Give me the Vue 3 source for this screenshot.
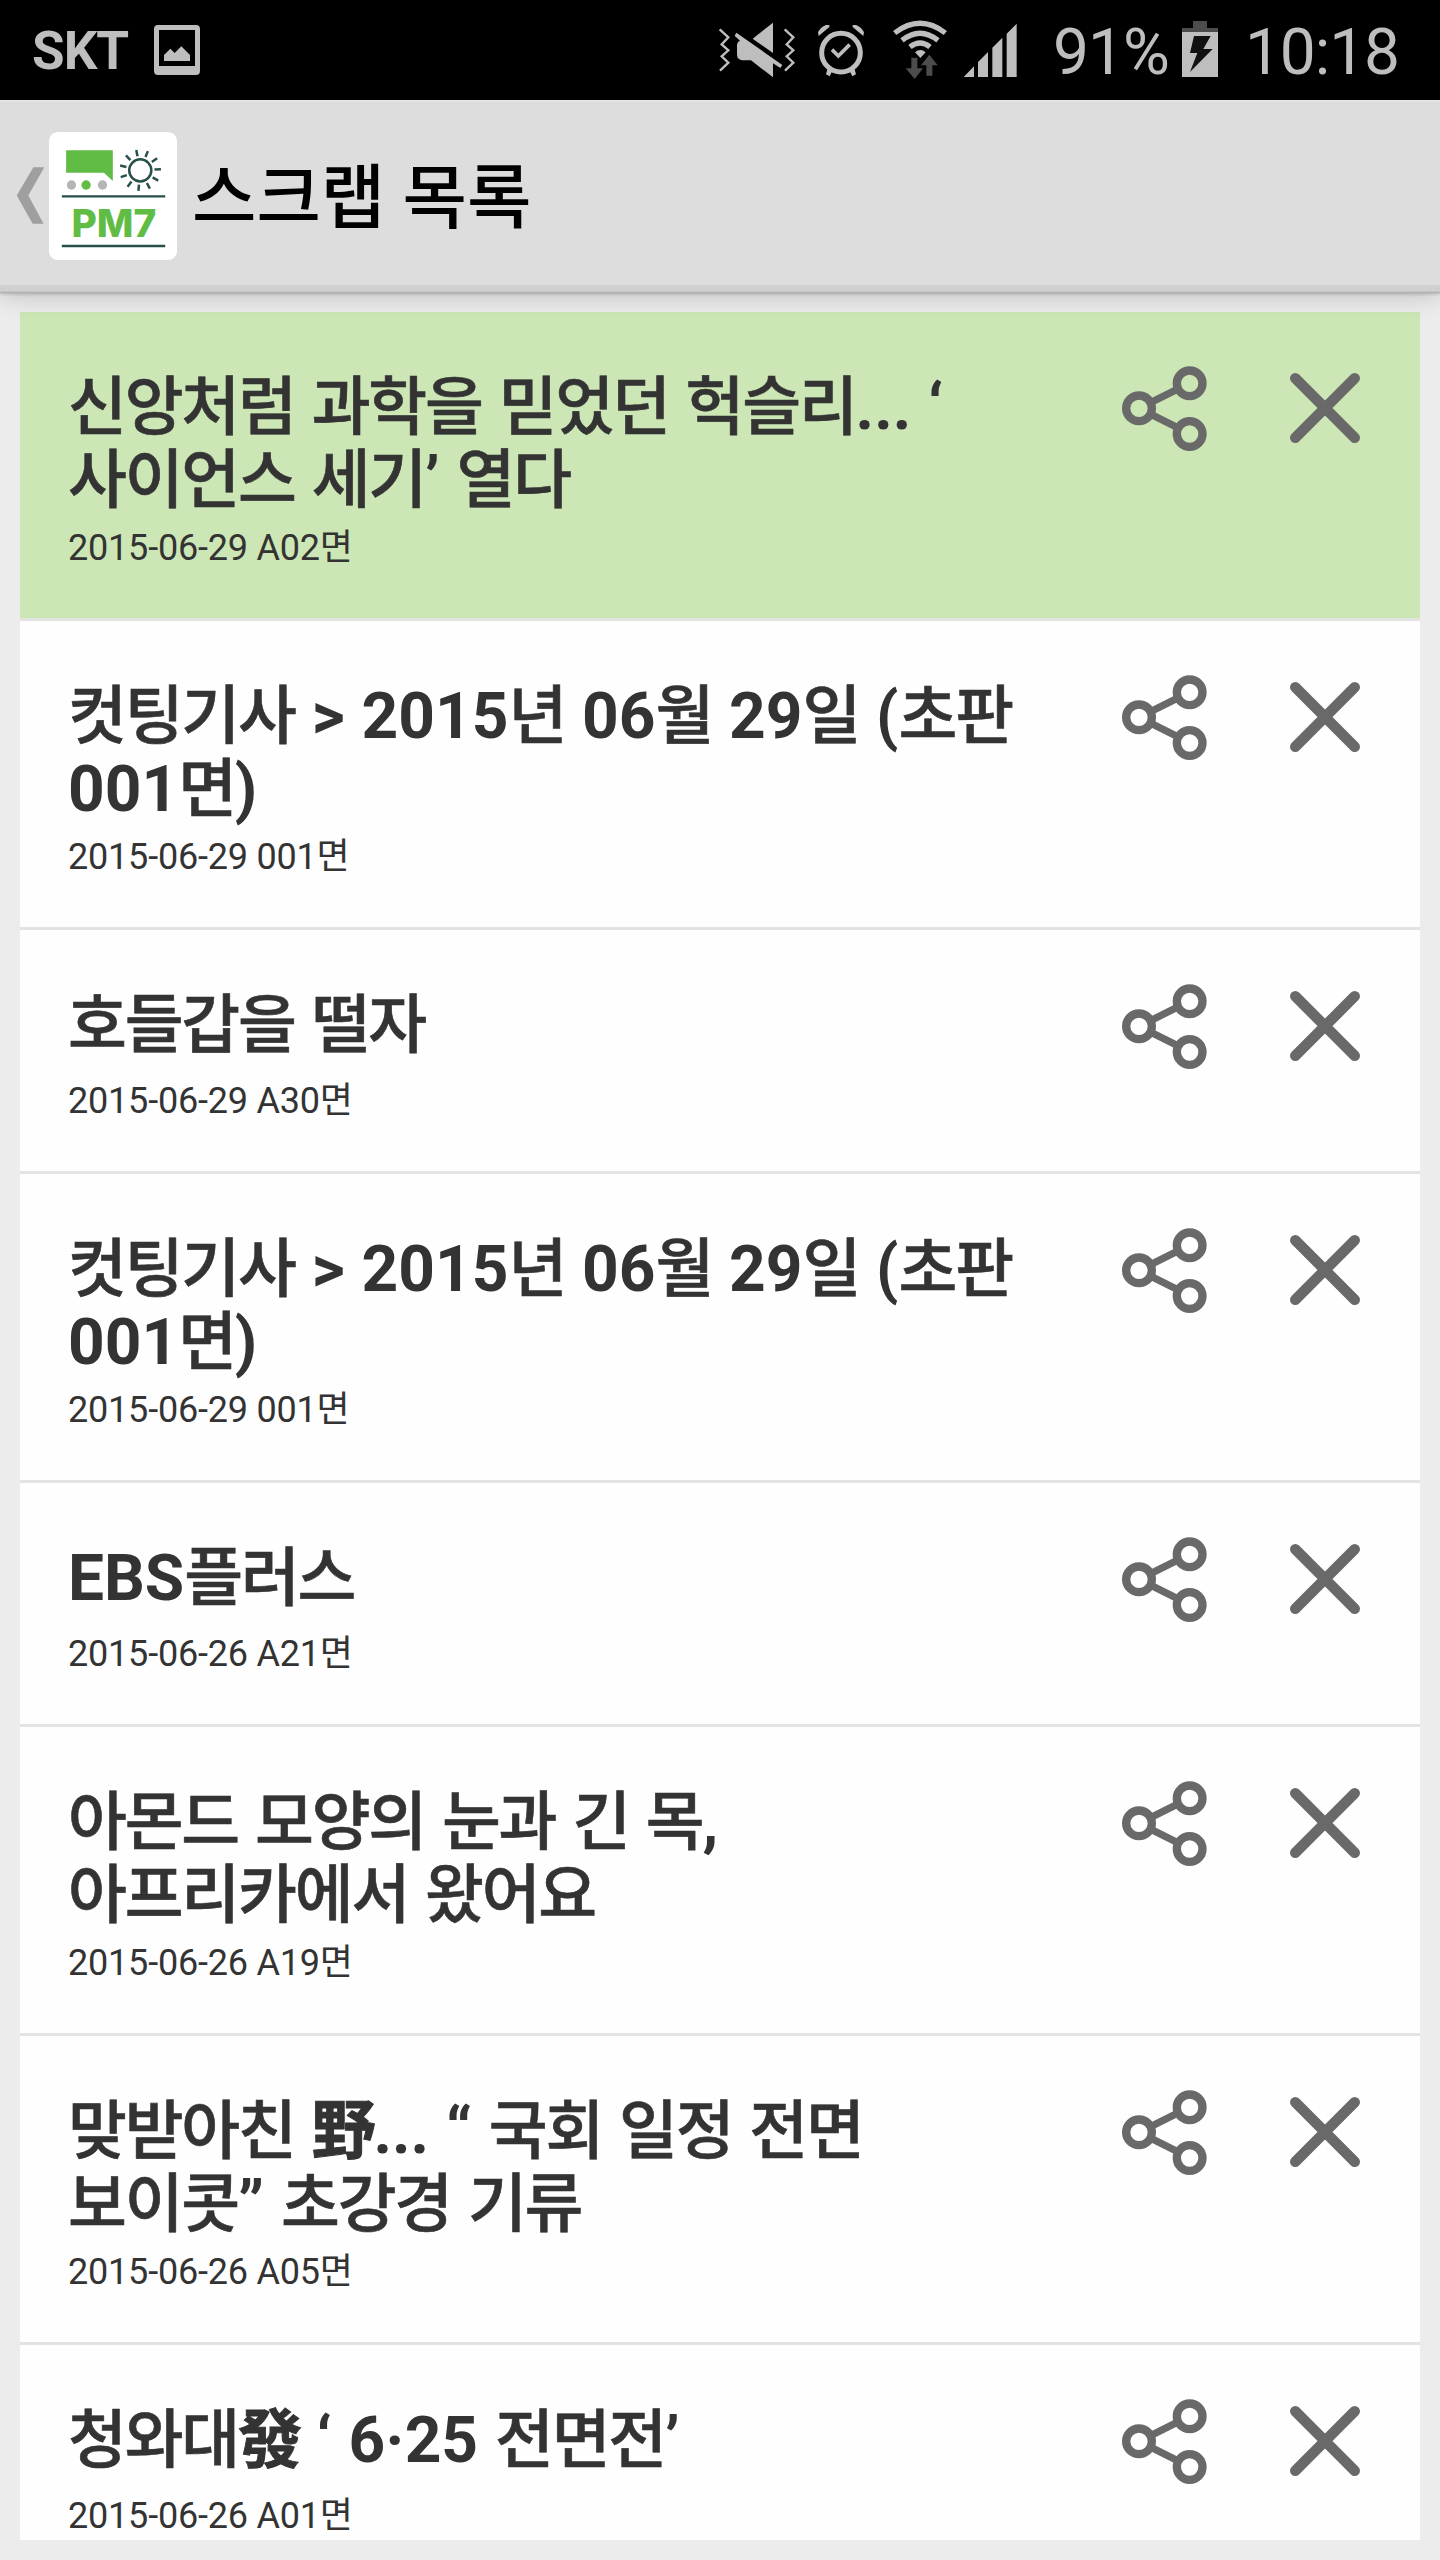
<script setup>
const scraps = [
  { id: 1, lines: ['신앙처럼 과학을 믿었던 헉슬리... ‘', '사이언스 세기’ 열다'], meta: '2015-06-29 A02면', selected: true },
  { id: 2, lines: ['컷팅기사 > 2015년 06월 29일 (초판', '001면)'], meta: '2015-06-29 001면' },
  { id: 3, lines: ['호들갑을 떨자'], meta: '2015-06-29 A30면' },
  { id: 4, lines: ['컷팅기사 > 2015년 06월 29일 (초판', '001면)'], meta: '2015-06-29 001면' },
  { id: 5, lines: ['EBS플러스'], meta: '2015-06-26 A21면' },
  { id: 6, lines: ['아몬드 모양의 눈과 긴 목,', '아프리카에서 왔어요'], meta: '2015-06-26 A19면' },
  { id: 7, lines: ['맞받아친 野... “ 국회 일정 전면', '보이콧” 초강경 기류'], meta: '2015-06-26 A05면' },
  { id: 8, lines: ['청와대發 ‘ 6·25 전면전’'], meta: '2015-06-26 A01면' },
];

// Separa hangul, hanja y texto latino para darle a cada uno su ajuste
const toRuns = (text) =>
  (text.match(/[가-힣]+|[一-龥]+|[^가-힣一-龥]+/g) || []).map((part) => ({
    text: part,
    hangul: /[가-힣]/.test(part),
    hanja: /[一-龥]/.test(part),
  }));

const sunRays = Array.from({ length: 11 }, (_, i) => (i * 360) / 11 - 3);
</script>

<template>
  <div class="screen">
    <div class="status-bar">
      <span class="carrier">SKT</span>
      <svg class="icon-picture" viewBox="462 75 138 150">
        <path
          fill-rule="evenodd"
          d="M474 75h114a12 12 0 0 1 12 12v126a12 12 0 0 1-12 12H474a12 12 0 0 1-12-12V87a12 12 0 0 1 12-12zM477 90v108h108V90z"
        />
        <path d="M492 183v-18l19-19 13 13 20-20 26 26v18z" />
      </svg>

      <svg class="icon-mute" viewBox="54 54 234 186">
        <path class="line" d="M59 88l26 24-20 21 20 18-20 18 20 19-25 24" />
        <path class="line" d="M254 88l26 24-20 21 20 18-20 18 20 19-25 24" />
        <path d="M219 68v91l-61-43z" />
        <path d="M109 98l138 97-6 9-22-14v42l-66-51h-27q-15-2-15-18v-27q0-10 9-14l-16-15z" />
      </svg>
      <svg class="icon-alarm" viewBox="351 54 144 186">
        <circle class="line ring" cx="423" cy="158" r="58" />
        <path class="line ring" d="M396 149l19 19 34-34" />
        <path d="M354 97q8-16 24-22h10v6l-32 27zM492 97q-8-16-24-22h-10v6l32 27z" />
        <path d="M383 205l14 8-8 16-11-6zM463 205l-14 8 8 16 11-6z" />
      </svg>
      <svg class="icon-wifi" viewBox="576 54 168 186">
        <path class="line wave" d="M584 99q76-58 152 0" />
        <path class="line wave" d="M606 121q54-43 108 0" />
        <path class="line wave" d="M630 141q30-24 60 0" />
        <path d="M645 157q16-14 32 0l-16 17z" />
        <path class="dim" d="M634 173h18v32h17l-25 32-27-32h17z" />
        <path class="dim" d="M679 227h18v-31h16l-25-32-25 32h16z" />
      </svg>
      <svg class="icon-signal" viewBox="789 54 162 186">
        <path d="M791 231l31-32v32zM834 186l30-30v75h-30zM877 143l30-30v118h-30zM920 101l30-30v160h-30z" />
      </svg>
      <span class="percent">91%</span>
      <svg class="icon-battery" viewBox="426 54 108 186">
        <path class="dim" d="M459 63h42v21h33v13H426V84h33z" />
        <path d="M426 96h108v135H426z" />
        <path class="bolt" d="M462 108h50l-22 39h28l-68 69 22-57h-22z" />
      </svg>
      <span class="clock">10:18</span>
    </div>

    <header class="app-bar">
      <svg class="back" viewBox="46 198 80 178" preserveAspectRatio="none">
        <path d="M94 202h30l-44 85 42 85H92L48 287z" />
      </svg>
      <svg class="logo" viewBox="137 96 359 384" preserveAspectRatio="none">
        <rect x="137" y="96" width="359" height="384" rx="26" fill="#fff" />
        <path fill="#61bc46" d="M185 151h131v92l-25-25H185z" />
        <ellipse cx="200" cy="255" rx="13" ry="14" fill="#b5b5b5" />
        <ellipse cx="241" cy="255" rx="13" ry="14" fill="#61bc46" />
        <ellipse cx="287" cy="255" rx="13" ry="14" fill="#b5b5b5" />
        <g fill="none" stroke="#27504b" stroke-width="7">
          <g transform="translate(393 211) scale(1 1.07)">
            <circle r="31" />
            <path
              v-for="angle in sunRays"
              :key="angle"
              d="M40 0h18"
              :transform="`rotate(${angle})`"
            />
          </g>
          <path d="M173 289h290M173 438h290" />
        </g>
        <text x="200" y="410" textLength="238" lengthAdjust="spacingAndGlyphs">PM7</text>
      </svg>
      <h1>스크랩 목록</h1>
    </header>

    <main class="list">
      <article
        v-for="scrap in scraps"
        :key="scrap.id"
        class="row"
        :class="{ selected: scrap.selected }"
      >
        <div class="content">
          <h2>
            <span v-for="line in scrap.lines" :key="line" class="title-line"
              ><span
                v-for="(run, i) in toRuns(line)"
                :key="i"
                :class="{ hangul: run.hangul, hanja: run.hanja }"
                >{{ run.text }}</span
              ></span
            >
          </h2>
          <p>{{ scrap.meta }}</p>
        </div>
        <svg class="share" viewBox="65 78 255 255">
          <path d="M150 188l84-42M150 222l84 42" stroke-width="22" />
          <circle cx="116" cy="205" r="38.5" />
          <circle cx="268" cy="130" r="38.5" />
          <circle cx="268" cy="282" r="38.5" />
        </svg>
        <svg class="close" viewBox="569 98 211 211">
          <path d="M585 114l179 179M764 114L585 293" />
        </svg>
      </article>
    </main>
  </div>
</template>

<style>
body {
  margin: 0;
  background: #ececec;
}
</style>

<style scoped>
.screen {
  width: 1440px;
  height: 2560px;
  box-sizing: border-box;
  display: flex;
  flex-direction: column;
  overflow: hidden;
  background: #ececec;
  color: #333333;
  font-family: Roboto, 'Noto Sans CJK KR', sans-serif;
}

svg {
  display: block;
  flex: none;
}

/* BARRA DE ESTADO */
.status-bar {
  height: 100px;
  flex: none;
  display: flex;
  align-items: flex-start;
  background: #000000;
  color: #bebebe;
}

.status-bar svg {
  height: 62px;
  margin-top: 18px;
  fill: #bebebe;
}

.status-bar .line {
  fill: none;
  stroke: #bebebe;
  stroke-width: 7;
}

.status-bar .ring {
  stroke-width: 15;
}

.status-bar path.ring {
  stroke-width: 11;
}

.status-bar .wave {
  stroke-width: 16;
}

.status-bar .dim {
  fill: #4c4c4c;
}

.status-bar .bolt {
  fill: #111111;
}

.status-bar span {
  line-height: 64px;
  white-space: nowrap;
}

.carrier {
  width: 122px;
  padding-left: 32px;
  padding-top: 19px;
  font-size: 53px;
  font-weight: 700;
  letter-spacing: -1px;
}

.status-bar .icon-picture {
  width: 46px;
  height: 50px;
  margin-top: 25px;
}

.icon-mute {
  width: 78px;
  margin-left: 518px;
}

.icon-alarm {
  width: 48px;
  margin-left: 21px;
}

.icon-wifi {
  width: 56px;
  margin-left: 27px;
}

.icon-signal {
  width: 54px;
  margin-left: 15px;
}

.percent {
  width: 129px;
  margin-left: 36px;
  padding-top: 21px;
  font-size: 64px;
  letter-spacing: -1px;
}

.icon-battery {
  width: 36px;
}

.clock {
  margin-left: 27px;
  padding-top: 21px;
  font-size: 64px;
  letter-spacing: -1.1px;
}

/* CABECERA */
.app-bar {
  position: relative;
  z-index: 1;
  height: 193px;
  flex: none;
  box-sizing: border-box;
  display: flex;
  align-items: flex-start;
  padding-left: 16px;
  background: linear-gradient(#e6e6e6 0 1px, #dddddd 2px 184px, #d0d0d0 186px 191px, #a8a8a8 193px);
  box-shadow: 0 2px 24px rgba(0, 0, 0, 0.2), 0 1px 3px rgba(0, 0, 0, 0.2);
}

.back {
  width: 29px;
  height: 59px;
  margin-top: 66px;
  fill: #9f9f9f;
}

.logo {
  width: 128px;
  height: 128px;
  margin: 32px 0 0 4px;
}

.logo text {
  fill: #61bc46;
  font-family: Inter, sans-serif;
  font-size: 116px;
  font-weight: 800;
}

h1 {
  margin: 0 0 0 15px;
  padding-top: 51px;
  color: #000000;
  font-size: 70px;
  font-weight: 500;
  line-height: 96px;
}

/* LISTA */
.list {
  width: 1400px;
  height: 2228px;
  margin: 19px 20px 20px;
  flex: none;
  overflow: hidden;
}

.row {
  display: flex;
  align-items: flex-start;
  background: #fefefe;
  border-bottom: 3px solid #e3e3e3;
}

.row.selected {
  background: #cde6b5;
}

.content {
  width: 1053px;
  box-sizing: border-box;
  flex: none;
  padding: 59px 0 49px 48px;
}

h2 {
  min-height: 81px;
  margin: 0;
  font-size: 64px;
  font-weight: 700;
  line-height: 73px;
  word-spacing: 1px;
}

.title-line {
  display: block;
  white-space: pre;
}

.hangul,
.hanja {
  letter-spacing: -2.2px;
}

/* Peso intermedio entre medium y bold */
.hangul {
  font-weight: 500;
  -webkit-text-stroke: 0.6px #333333;
}

.hanja {
  -webkit-text-stroke: 1px #333333;
}

p {
  margin: 10px 0 0;
  font-size: 36px;
  line-height: 42px;
  letter-spacing: -0.2px;
}

.share {
  width: 85px;
  height: 85px;
  margin: 54px 0 0 49px;
}

.close {
  width: 70px;
  height: 70px;
  margin: 61px 0 0 83px;
}

.share,
.close {
  fill: none;
  stroke: #696969;
  stroke-width: 25;
}

.close {
  stroke-width: 32;
  stroke-linecap: round;
}
</style>
